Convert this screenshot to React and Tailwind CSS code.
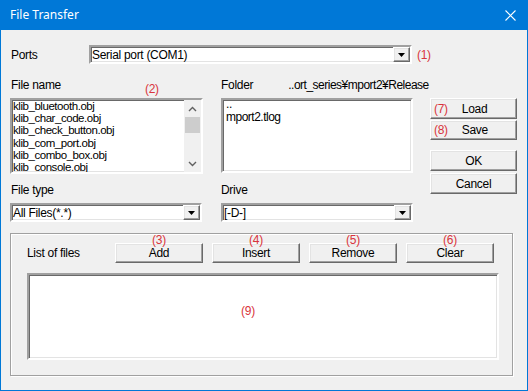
import React from "react";

const sunken =
  "border-2 border-t-[#a0a0a0] border-l-[#a0a0a0] border-b-white border-r-white shadow-[inset_1px_1px_0_#696969,inset_-1px_-1px_0_#e3e3e3]";
const raised =
  "border border-t-white border-l-white border-b-[#696969] border-r-[#696969] shadow-[inset_-1px_-1px_0_#a0a0a0,inset_1px_1px_0_#e3e3e3] bg-[#f0f0f0]";
const red = "text-[#d9343c]";

function DropBtn() {
  return (
    <div className={`absolute right-0 top-0 bottom-0 w-[17px] ${raised} flex items-center justify-center`}>
      <svg width="7" height="4" viewBox="0 0 7 4">
        <path d="M0 0H7L3.5 4Z" fill="#000" />
      </svg>
    </div>
  );
}

function Combo({ w, text }) {
  return (
    <div className={`${w} h-[19px] bg-white ${sunken} relative flex items-center`}>
      <span className="pl-[1px] leading-none">{text}</span>
      <DropBtn />
    </div>
  );
}

function Btn({ children, className = "" }) {
  return (
    <div className={`${raised} flex items-center justify-center ${className}`}>{children}</div>
  );
}

function Chevron({ up }) {
  return (
    <svg width="9" height="6" viewBox="0 0 9 6">
      <path
        d={up ? "M1 5L4.5 1.5L8 5" : "M1 1L4.5 4.5L8 1"}
        stroke="#606060"
        strokeWidth="1.4"
        fill="none"
      />
    </svg>
  );
}

export default function App() {
  const files = [
    "klib_bluetooth.obj",
    "klib_char_code.obj",
    "klib_check_button.obj",
    "klib_com_port.obj",
    "klib_combo_box.obj",
    "klib_console.obj",
  ];
  return (
    <div
      className="w-[528px] h-[391px] bg-[#0078d7] px-[1px] pb-[1px] flex flex-col text-[12px] text-black"
      style={{ fontFamily: '"Liberation Sans", Arial, sans-serif' }}
    >
      <div className="h-[30px] flex items-center justify-between pl-[9px] pr-[11px] text-white">
        <span className="text-[12px]" style={{ fontFamily: '"Noto Sans", "Open Sans", sans-serif' }}>
          File Transfer
        </span>
        <svg width="11" height="11" viewBox="0 0 11 11">
          <path d="M0.5 0.5L10.5 10.5M10.5 0.5L0.5 10.5" stroke="#fff" strokeWidth="1.1" />
        </svg>
      </div>
      <div className="flex-1 bg-[#f0f0f0] pl-[9px] pt-[15px] tracking-[-0.3px]">
        {/* Ports row */}
        <div className="flex items-center h-[19px]">
          <span className="w-[79px] pl-[1px]">Ports</span>
          <Combo w="w-[323px]" text="Serial port (COM1)" />
          <span className={`ml-[5px] ${red}`}>(1)</span>
        </div>

        <div className="flex mt-[14px]">
          {/* left column */}
          <div className="w-[193px] flex flex-col">
            <div className="h-[14px] flex items-center relative">
              <span className="pl-[1px]">File name</span>
              <span className={`absolute left-[135px] top-[2px] ${red}`}>(2)</span>
            </div>
            <div className={`mt-[6px] h-[76px] bg-white ${sunken} flex`}>
              <div className="flex-1 pl-[1px] text-[11.5px] tracking-[-0.45px] leading-[12.2px] overflow-hidden">
                {files.map((f) => (
                  <div key={f}>{f}</div>
                ))}
              </div>
              <div className="w-[17px] bg-[#f0f0f0] flex flex-col items-center">
                <div className="h-[17px] flex items-center justify-center">
                  <Chevron up />
                </div>
                <div className="w-[15px] h-[16px] bg-[#cdcdcd]" />
                <div className="flex-1" />
                <div className="h-[17px] flex items-center justify-center">
                  <Chevron />
                </div>
              </div>
            </div>
            <div className="h-[14px] mt-[9px] flex items-center pl-[1px]">File type</div>
            <div className="mt-[6px]">
              <Combo w="w-[192px]" text="All Files(*.*)" />
            </div>
          </div>

          {/* right column */}
          <div className="w-[192px] ml-[18px] flex flex-col">
            <div className="h-[14px] flex items-center">
              <span>Folder</span>
              <span className="ml-[35px] tracking-[-0.5px]">..ort_series¥mport2¥Release</span>
            </div>
            <div className={`mt-[6px] h-[75px] bg-white ${sunken} pl-[3px] leading-[13px]`}>
              <div className="-mt-[2px]">..</div>
              <div className="tracking-[-0.5px]">mport2.tlog</div>
            </div>
            <div className="h-[14px] mt-[10px] flex items-center">Drive</div>
            <div className="mt-[6px]">
              <Combo w="w-[192px]" text="[-D-]" />
            </div>
          </div>

          {/* buttons column */}
          <div className="w-[87px] ml-[17px] mt-[20px] flex flex-col">
            <Btn className="h-[21px] !justify-start pl-[3px] gap-[14px]">
              <span className={red}>(7)</span>
              <span>Load</span>
            </Btn>
            <Btn className="h-[20px] mt-[1px] !justify-start pl-[3px] gap-[14px]">
              <span className={red}>(8)</span>
              <span>Save</span>
            </Btn>
            <Btn className="h-[21px] mt-[10px]">OK</Btn>
            <Btn className="h-[21px] mt-[2px]">Cancel</Btn>
          </div>
        </div>

        {/* group box */}
        <div className="mt-[11px] w-[503px] h-[143px] border border-[#a0a0a0] shadow-[inset_1px_1px_0_#fff,1px_1px_0_#fff] pl-[16px] pt-[9px]">
          <div className="flex items-center h-[20px]">
            <span className="w-[88px]">List of files</span>
            {[
              ["Add", "(3)"],
              ["Insert", "(4)"],
              ["Remove", "(5)"],
              ["Clear", "(6)"],
            ].map(([t, n]) => (
              <div key={t} className="relative w-[88px] mr-[9px] h-[20px]">
                <Btn className="h-[20px] w-[88px]">{t}</Btn>
                <span className={`absolute left-0 right-0 text-center -top-[9px] ${red} leading-[12px]`}>
                  {n}
                </span>
              </div>
            ))}
          </div>
          <div className={`mt-[10px] w-[472px] h-[87px] bg-white ${sunken} flex items-center justify-center`}>
            <span className={`${red} mr-[30px] mt-[-11px]`}>(9)</span>
          </div>
        </div>
      </div>
    </div>
  );
}
